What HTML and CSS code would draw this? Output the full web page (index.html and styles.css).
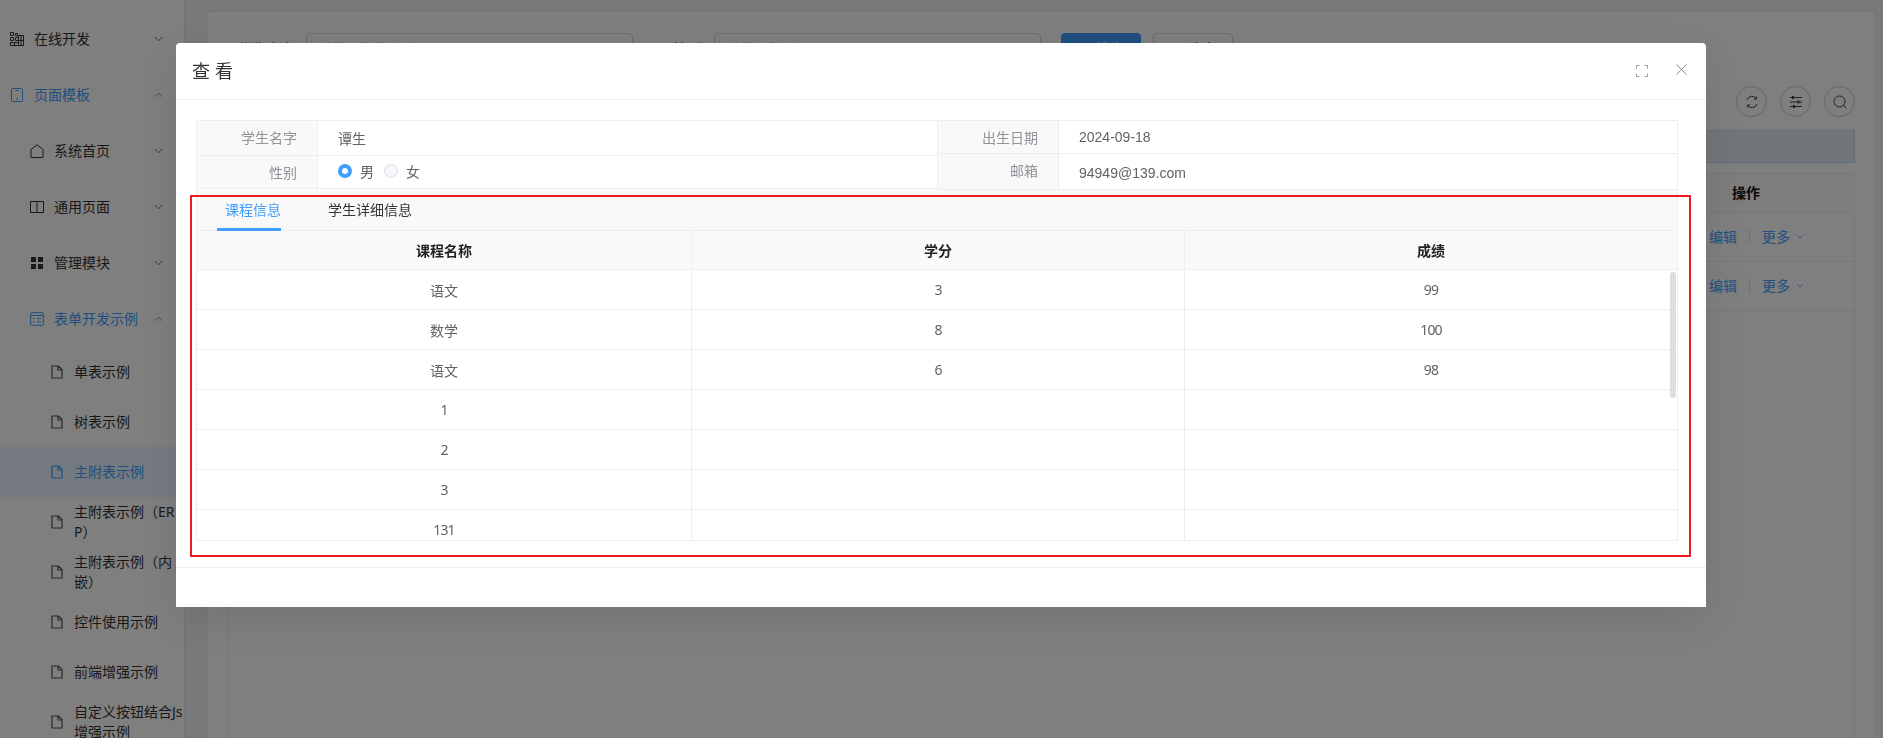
FILE: index.html
```html
<!DOCTYPE html>
<html lang="zh-CN">
<head>
    <meta charset="UTF-8">
    <title>主附表示例</title>
    <link rel="stylesheet" href="styles.css">
</head>
<body>
    <div class="layout">
        <aside class="sider">
            <div class="menu-item level-1">
                <svg class="menu-icon" viewBox="0 0 14 14"><path d="M.5.5h3v3h-3zM5.500 1.500h2v2h-2zM.5 5.500h3v3h-3zM5.500 5.500h3v3h-3zM.5 10.500h8v3h-8zM4.500 10.500v3M8.500 3.500h5v10h-5zM8.500 8.500h5M11 3.500v10" fill="none" stroke="currentColor"/></svg>
                <span class="menu-text">在线开发</span>
                <svg class="arrow" viewBox="0 0 10 6"><path d="M1 1l4 4 4-4" fill="none" stroke="currentColor"/></svg>
            </div>
            <div class="menu-item level-1 open">
                <svg class="menu-icon" viewBox="0 0 14 14"><rect x="1.500" y=".5" width="11" height="13" rx="1" fill="none" stroke="currentColor"/><path d="M5.500 2.500h3M6 11h2" stroke="currentColor"/></svg>
                <span class="menu-text">页面模板</span>
                <svg class="arrow" viewBox="0 0 10 6"><path d="M1 5l4-4 4 4" fill="none" stroke="currentColor"/></svg>
            </div>
            <div class="menu-item level-2">
                <svg class="menu-icon" viewBox="0 0 14 14"><path d="M1 13.500V5.500L7 .7l6 4.800v8z" fill="none" stroke="currentColor"/></svg>
                <span class="menu-text">系统首页</span>
                <svg class="arrow" viewBox="0 0 10 6"><path d="M1 1l4 4 4-4" fill="none" stroke="currentColor"/></svg>
            </div>
            <div class="menu-item level-2">
                <svg class="menu-icon" viewBox="0 0 14 14"><path d="M.5 1.500h13v11H.5zM7 1.500v11" fill="none" stroke="currentColor"/></svg>
                <span class="menu-text">通用页面</span>
                <svg class="arrow" viewBox="0 0 10 6"><path d="M1 1l4 4 4-4" fill="none" stroke="currentColor"/></svg>
            </div>
            <div class="menu-item level-2">
                <svg class="menu-icon" viewBox="0 0 14 14"><path d="M1 1h5v5H1zM8 1h5v5H8zM1 8h5v5H1zM8 8h5v5H8z" fill="currentColor"/></svg>
                <span class="menu-text">管理模块</span>
                <svg class="arrow" viewBox="0 0 10 6"><path d="M1 1l4 4 4-4" fill="none" stroke="currentColor"/></svg>
            </div>
            <div class="menu-item level-2 open">
                <svg class="menu-icon" viewBox="0 0 14 14"><rect x=".7" y=".7" width="12.600" height="12.600" rx="1" fill="none" stroke="currentColor"/><path d="M1 3.500h12M3 6.500h2M7 6.500h4M3 10h2M7 10h4" stroke="currentColor"/></svg>
                <span class="menu-text">表单开发示例</span>
                <svg class="arrow" viewBox="0 0 10 6"><path d="M1 5l4-4 4 4" fill="none" stroke="currentColor"/></svg>
            </div>
            <div class="menu-item level-3">
                <svg class="file-icon" viewBox="0 0 12 14"><path d="M1 1h6.500L11 4.500V13H1zM7 1v4h4" fill="none" stroke="currentColor" stroke-width="1.200"/></svg>
                <span class="menu-text">单表示例</span>
            </div>
            <div class="menu-item level-3">
                <svg class="file-icon" viewBox="0 0 12 14"><path d="M1 1h6.500L11 4.500V13H1zM7 1v4h4" fill="none" stroke="currentColor" stroke-width="1.200"/></svg>
                <span class="menu-text">树表示例</span>
            </div>
            <div class="menu-item level-3 selected">
                <svg class="file-icon" viewBox="0 0 12 14"><path d="M1 1h6.500L11 4.500V13H1zM7 1v4h4" fill="none" stroke="currentColor" stroke-width="1.200"/></svg>
                <span class="menu-text">主附表示例</span>
            </div>
            <div class="menu-item level-3">
                <svg class="file-icon" viewBox="0 0 12 14"><path d="M1 1h6.500L11 4.500V13H1zM7 1v4h4" fill="none" stroke="currentColor" stroke-width="1.200"/></svg>
                <span class="menu-text">主附表示例（ER<br>P）</span>
            </div>
            <div class="menu-item level-3">
                <svg class="file-icon" viewBox="0 0 12 14"><path d="M1 1h6.500L11 4.500V13H1zM7 1v4h4" fill="none" stroke="currentColor" stroke-width="1.200"/></svg>
                <span class="menu-text">主附表示例（内<br>嵌）</span>
            </div>
            <div class="menu-item level-3">
                <svg class="file-icon" viewBox="0 0 12 14"><path d="M1 1h6.500L11 4.500V13H1zM7 1v4h4" fill="none" stroke="currentColor" stroke-width="1.200"/></svg>
                <span class="menu-text">控件使用示例</span>
            </div>
            <div class="menu-item level-3">
                <svg class="file-icon" viewBox="0 0 12 14"><path d="M1 1h6.500L11 4.500V13H1zM7 1v4h4" fill="none" stroke="currentColor" stroke-width="1.200"/></svg>
                <span class="menu-text">前端增强示例</span>
            </div>
            <div class="menu-item level-3">
                <svg class="file-icon" viewBox="0 0 12 14"><path d="M1 1h6.500L11 4.500V13H1zM7 1v4h4" fill="none" stroke="currentColor" stroke-width="1.200"/></svg>
                <span class="menu-text">自定义按钮结合Js<br>增强示例</span>
            </div>
        </aside>

        <main class="content">
            <div class="page-card">
                <div class="search-form">
                    <label class="search-label label-name">学生名字</label>
                    <div class="search-input">请输入学生名字</div>
                    <label class="search-label label-sex">性别</label>
                    <div class="search-input">请选择性别</div>
                    <button class="btn btn-primary">
                        <svg class="btn-icon" viewBox="0 0 14 14"><circle cx="6.500" cy="6.500" r="5" fill="none" stroke="currentColor"/></svg>搜索
                    </button>
                    <button class="btn">
                        <svg class="btn-icon" viewBox="0 0 14 14"><path d="M7 1v6M2 13V8h10v5z" fill="none" stroke="currentColor"/></svg>清空
                    </button>
                </div>
                <div class="toolbar">
                    <span class="circle-btn">
                        <svg viewBox="0 0 14 14"><path d="M2 5a5.200 5.200 0 0 1 9.500-1M12 9a5.200 5.200 0 0 1-9.500 1M11.500 1.500V4H9M2.500 12.500V10H5" fill="none" stroke="currentColor"/></svg>
                    </span>
                    <span class="circle-btn">
                        <svg viewBox="0 0 14 14"><path d="M1 2.500h12M1 7h12M1 11.500h12" stroke="currentColor"/><path d="M3 1h2v3H3zM8.500 5.500h2v3h-2zM4 10h2v3H4z" fill="currentColor"/></svg>
                    </span>
                    <span class="circle-btn">
                        <svg viewBox="0 0 14 14"><circle cx="6.500" cy="6.500" r="5.500" fill="none" stroke="currentColor"/><path d="M10.500 10.500l3 3" stroke="currentColor"/></svg>
                    </span>
                </div>
                <div class="alert-bar"></div>
                <div class="list-table">
                    <div class="list-row list-head"><span class="list-action">操作</span></div>
                    <div class="list-row">
                        <span class="link">编辑</span><span class="split"></span><span class="link">更多</span>
                        <svg class="more-arrow" viewBox="0 0 10 6"><path d="M1 1l4 4 4-4" fill="none" stroke="currentColor"/></svg>
                    </div>
                    <div class="list-row">
                        <span class="link">编辑</span><span class="split"></span><span class="link">更多</span>
                        <svg class="more-arrow" viewBox="0 0 10 6"><path d="M1 1l4 4 4-4" fill="none" stroke="currentColor"/></svg>
                    </div>
                </div>
            </div>
        </main>
    </div>

    <div class="mask">
        <div class="modal">
            <div class="modal-header">
                <span class="modal-title">查 看</span>
                <svg class="full-icon" viewBox="0 0 12 12"><path d="M.5 3.500v-3h3M8.500.5h3v3M11.500 8.500v3h-3M3.500 11.500h-3v-3" fill="none" stroke="currentColor"/></svg>
                <svg class="close-icon" viewBox="0 0 11 11"><path d="M.5.5l10 10M10.500.5l-10 10" stroke="currentColor"/></svg>
            </div>
            <div class="modal-body">
                <div class="desc">
                    <div class="desc-col">
                        <div class="desc-row row-a">
                            <div class="desc-label">学生名字</div>
                            <div class="desc-value">谭生</div>
                        </div>
                        <div class="desc-row row-b">
                            <div class="desc-label">性别</div>
                            <div class="desc-value value-up">
                                <span class="radio checked"></span><span class="radio-text">男</span>
                                <span class="radio"></span><span class="radio-text">女</span>
                            </div>
                        </div>
                    </div>
                    <div class="desc-col desc-col-right">
                        <div class="desc-row row-c">
                            <div class="desc-label">出生日期</div>
                            <div class="desc-value">2024-09-18</div>
                        </div>
                        <div class="desc-row row-d">
                            <div class="desc-label">邮箱</div>
                            <div class="desc-value value-down">94949@139.com</div>
                        </div>
                    </div>
                </div>

                <div class="tabs">
                    <div class="tabs-nav">
                        <span class="tab active">课程信息</span>
                        <span class="tab">学生详细信息</span>
                    </div>
                </div>
                <div class="grid">
                    <div class="grid-head">
                        <div class="cell">课程名称</div>
                        <div class="cell">学分</div>
                        <div class="cell">成绩</div>
                    </div>
                    <div class="grid-body">
                        <div class="grid-row"><div class="cell">语文</div><div class="cell num">3</div><div class="cell num">99</div></div>
                        <div class="grid-row"><div class="cell">数学</div><div class="cell num">8</div><div class="cell num">100</div></div>
                        <div class="grid-row"><div class="cell">语文</div><div class="cell num">6</div><div class="cell num">98</div></div>
                        <div class="grid-row"><div class="cell num">1</div><div class="cell"></div><div class="cell"></div></div>
                        <div class="grid-row"><div class="cell num">2</div><div class="cell"></div><div class="cell"></div></div>
                        <div class="grid-row"><div class="cell num">3</div><div class="cell"></div><div class="cell"></div></div>
                        <div class="grid-row"><div class="cell num">131</div><div class="cell"></div><div class="cell"></div></div>
                        <div class="scroll-thumb"></div>
                    </div>
                </div>
            </div>
            <div class="modal-footer"></div>
            <!-- red box drawn on the screenshot -->
            <div class="red-box"></div>
        </div>
    </div>
</body>
</html>
```

FILE: styles.css
```css
* {
    box-sizing: border-box;
}
html,
body {
    height: 100%;
}
body {
    margin: 0;
    overflow: hidden;
    font-family: "Liberation Sans", "Noto Sans CJK SC", sans-serif;
    font-size: 14px;
    color: #333;
    background-color: #f0f2f5;
}
.layout {
    display: flex;
    height: 738px;
    overflow: hidden;
}

/* Sidebar */
.sider {
    width: 185px;
    flex-shrink: 0;
    padding-top: 11px;
    font-family: "Noto Sans", "Noto Sans CJK SC", sans-serif;
    background-color: #fff;
    border-right: 1px solid #e4e7ed;
    color: #333;
}
.menu-item {
    position: relative;
    display: flex;
    align-items: center;
    line-height: 20px;
}
.level-1,
.level-2 {
    height: 56px;
}
.level-3 {
    height: 50px;
    padding-left: 51px;
}
.level-1 {
    padding-left: 10px;
}
.level-2 {
    padding-left: 30px;
}
.menu-icon {
    width: 14px;
    height: 14px;
    flex-shrink: 0;
    margin-right: 10px;
}
.file-icon {
    width: 12px;
    height: 14px;
    flex-shrink: 0;
    margin-right: 11px;
    color: #555;
}
.menu-text {
    white-space: nowrap;
}
.arrow {
    position: absolute;
    left: 154px;
    top: 25px;
    width: 9px;
    height: 6px;
    color: #555;
}
.open {
    color: #409eff;
}
.open .arrow {
    color: #409eff;
}
.level-3.selected {
    background-color: #e8f4ff;
    color: #409eff;
}
.selected .file-icon {
    color: #409eff;
}

/* Page behind the dialog */
.content {
    flex: 1;
    padding: 11px 7px 0 21px;
}
.page-card {
    height: 800px;
    padding: 21px 20px 0 21px;
    background-color: #fff;
    border: 1px solid #e4e7ed;
    border-radius: 4px;
}
.search-form {
    display: flex;
    height: 32px;
    align-items: center;
    line-height: 32px;
}
.search-label {
    color: #333;
}
.label-name {
    margin: 0 11px 0 11px;
}
.label-sex {
    margin: 0 13px 0 40px;
}
.search-input {
    width: 327px;
    height: 32px;
    padding-left: 12px;
    line-height: 30px;
    color: #aaa;
    border: 1px solid #d9d9d9;
    border-radius: 4px;
}
.btn {
    display: flex;
    width: 80px;
    height: 32px;
    align-items: center;
    justify-content: center;
    gap: 6px;
    margin-left: 12px;
    font: inherit;
    color: #333;
    background-color: #fff;
    border: 1px solid #d9d9d9;
    border-radius: 4px;
}
.btn-primary {
    margin-left: 20px;
    color: #fff;
    background-color: #409eff;
    border-color: #409eff;
}
.btn-icon {
    width: 12px;
    height: 12px;
}
.toolbar {
    display: flex;
    justify-content: flex-end;
    gap: 13px;
    margin-top: 21px;
}
.circle-btn {
    display: flex;
    width: 31px;
    height: 31px;
    align-items: center;
    justify-content: center;
    color: #444;
    border: 1px solid #ccc;
    border-radius: 50%;
}
.circle-btn svg {
    width: 14px;
    height: 14px;
}
.alert-bar {
    height: 33px;
    margin-top: 13px;
    background-color: #e4ecf6;
    border: 1px solid #c5daf0;
}
.list-table {
    height: 600px;
    margin-top: 10px;
    border: 1px solid #ebeef5;
}
.list-row {
    display: flex;
    height: 49px;
    align-items: center;
    padding-left: 1480px;
    padding-bottom: 2px;
    border-bottom: 1px solid #ebeef5;
}
.list-head {
    height: 39px;
    background-color: #fafafa;
}
.list-action {
    margin-left: 23px;
    font-weight: bold;
    color: #111;
}
.link {
    color: #409eff;
}
.split {
    width: 1px;
    height: 14px;
    margin: 0 12px;
    background-color: #ddd;
}
.more-arrow {
    width: 8px;
    height: 5px;
    margin-left: 6px;
    color: #409eff;
}

/* Dialog */
.mask {
    position: fixed;
    top: 0;
    left: 0;
    width: 100%;
    height: 100%;
    background-color: rgba(0, 0, 0, 0.5);
}
.modal {
    position: absolute;
    top: 43px;
    left: 176px;
    display: flex;
    flex-direction: column;
    width: 1530px;
    height: 564px;
    background-color: #fff;
    border-radius: 4px 4px 0 0;
    box-shadow: 0 12px 48px rgba(0, 0, 0, 0.1);
}
.modal-header {
    position: relative;
    display: flex;
    height: 57px;
    flex-shrink: 0;
    align-items: center;
    padding: 0 0 3px 16px;
    border-bottom: 1px solid #ebeef5;
}
.modal-title {
    font-size: 18px;
    color: #333;
}
.full-icon {
    position: absolute;
    left: 1460px;
    top: 22px;
    width: 12px;
    height: 12px;
    color: #999;
}
.close-icon {
    position: absolute;
    left: 1500px;
    top: 21px;
    width: 11px;
    height: 11px;
    color: #888;
}
.modal-body {
    flex: 1;
    padding: 20px 28px 0 20px;
    overflow: hidden;
}
.modal-footer {
    height: 40px;
    flex-shrink: 0;
    border-top: 1px solid #ebeef5;
}

/* Description rows */
.desc {
    display: flex;
}
.desc-col {
    width: 741px;
    border-left: 1px solid #ebeef5;
    border-top: 1px solid #ebeef5;
}
.desc-col-right {
    border-right: 1px solid #ebeef5;
}
.desc-row {
    display: flex;
    border-bottom: 1px solid #ebeef5;
}
.row-a {
    height: 35px;
}
.row-b {
    height: 33px;
}
.row-c {
    height: 33px;
}
.row-d {
    height: 36px;
}
.desc-label {
    width: 121px;
    flex-shrink: 0;
    padding: 6px 20px 0 0;
    text-align: right;
    color: #909399;
    background-color: #f9f9f9;
    border-right: 1px solid #ebeef5;
}
.desc-value {
    display: flex;
    align-items: center;
    flex: 1;
    padding-left: 20px;
    color: #606266;
}
.value-up {
    padding-bottom: 2px;
}
.value-down {
    padding-top: 2px;
}
.radio {
    width: 14px;
    height: 14px;
    margin-right: 8px;
    background-color: #f5f7fa;
    border: 1px solid #dcdfe6;
    border-radius: 50%;
}
.radio.checked {
    background-color: #fff;
    border: 4px solid #409eff;
}
.radio-text {
    margin-right: 10px;
}

/* Tabs and table */
.tabs {
    height: 41px;
    background-color: #f9f9f9;
    border-left: 1px solid #ebeef5;
    border-right: 1px solid #ebeef5;
}
.tabs-nav {
    display: flex;
    height: 41px;
    margin: 0 1px 0 2px;
    border-bottom: 1px solid #ebeef5;
}
.tab {
    height: 41px;
    padding: 10px 0 0 47px;
    line-height: 20px;
    color: #333;
}
.tab.active {
    margin-left: 18px;
    padding-left: 8px;
    color: #409eff;
    border-bottom: 3px solid #409eff;
}
.grid {
    border-left: 1px solid #ebeef5;
    border-right: 1px solid #ebeef5;
    border-bottom: 1px solid #ebeef5;
}
.grid-head {
    display: flex;
    height: 39px;
    font-weight: bold;
    color: #222;
    background-color: #f9f9f9;
    border-bottom: 1px solid #ebeef5;
}
.grid-body {
    position: relative;
    height: 270px;
    overflow: hidden;
}
.grid-row {
    display: flex;
    height: 40px;
    color: #606266;
    border-bottom: 1px solid #ebeef5;
}
.cell {
    display: flex;
    width: 493px;
    align-items: center;
    justify-content: center;
    border-right: 1px solid #ebeef5;
}
.cell:first-child {
    width: 495px;
}
.cell:last-child {
    flex: 1;
    border-right: none;
}
.num {
    font-family: "Noto Sans", sans-serif;
    letter-spacing: -0.8px;
}
.scroll-thumb {
    position: absolute;
    top: 2px;
    right: 1px;
    width: 6px;
    height: 126px;
    background-color: #dcdee0;
    border-radius: 3px;
}

/* Red box from the original screenshot */
.red-box {
    position: absolute;
    top: 152px;
    left: 14px;
    width: 1501px;
    height: 362px;
    border: 2px solid #ed1c24;
}
```
